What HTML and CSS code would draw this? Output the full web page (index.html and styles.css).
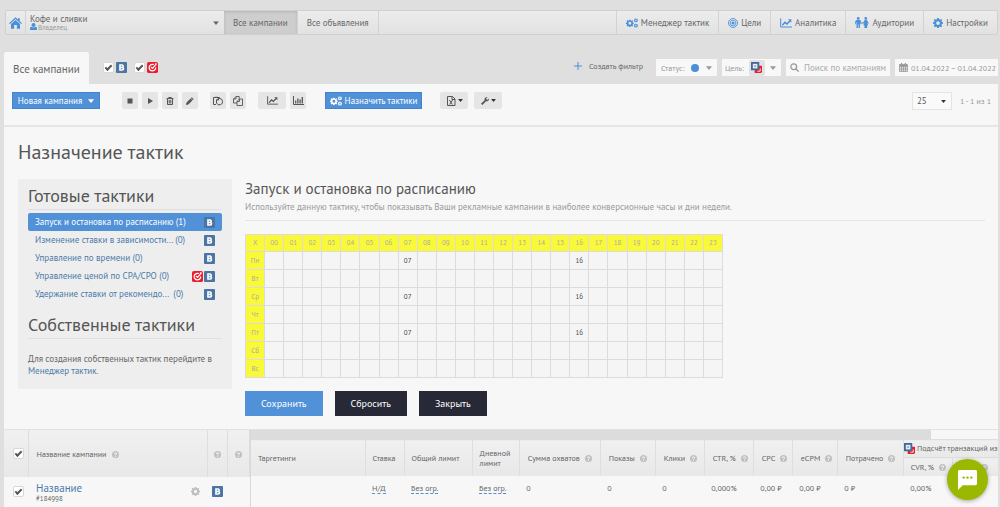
FILE: index.html
```html
<!DOCTYPE html>
<html lang="ru">
<head>
<meta charset="utf-8">
<title>Все кампании</title>
<meta name="viewport" content="width=device-width">
<link rel="stylesheet" href="styles.css">
</head>
<body>
<svg class="defs" aria-hidden="true">
  <symbol id="cog" viewBox="0 0 16 16"><path fill-rule="evenodd" d="M6.7 0h2.6l.4 2.1 1.5.6L13 1.500l1.700 1.700-1.300 1.800.7 1.500 2 .3v2.500l-2 .4-.7 1.500 1.300 1.800-1.800 1.800-1.700-1.300-1.500.7-.4 1.900H6.700l-.4-1.900-1.500-.7-1.800 1.300L1.200 13l1.300-1.800-.7-1.500L0 9.300V6.800l1.900-.4.6-1.500L1.200 3.200 3 1.400l1.800 1.300 1.500-.6zM8 5a3 3 0 1 0 0 6 3 3 0 0 0 0-6z"/></symbol>
  <symbol id="cogs" viewBox="0 0 20 16"><use href="#cog" x="0" y="2" width="13" height="13"/><use href="#cog" x="13" y="0" width="7" height="7"/><use href="#cog" x="13" y="9" width="7" height="7"/></symbol>
  <symbol id="caret" viewBox="0 0 8 5"><path d="M0 0h8L4 5z"/></symbol>
  <symbol id="vk" viewBox="0 0 12 12"><rect width="12" height="12" rx="1" fill="#4c75a3"/><path fill="none" stroke="#fff" stroke-width="1.700" d="M4.300 3.300v5.400h2.500a1.350 1.350 0 0 0 0-2.700H4.300h2.200a1.350 1.350 0 0 0 0-2.700z"/></symbol>
  <symbol id="mt" viewBox="0 0 12 12"><rect width="12" height="12" rx="2" fill="#ed1c2e"/><path fill="none" stroke="#fff" stroke-width="1.300" d="M7.500 2.900A3.600 3.600 0 1 0 9.500 6M4.200 5.300L6 7l4-4.500M8.600 2l2 .3"/></symbol>
  <symbol id="both" viewBox="0 0 12 12"><path fill="#ed1c2e" d="M4 4h8v6a2 2 0 0 1-2 2H4z"/><path fill="none" stroke="#fff" d="M10 7v3H7"/><path fill="#426a98" d="M0 0h9v9H0z"/><path fill="#e4edf6" d="M2 2h5v5H2z"/><path fill="#8eabc9" d="M3.500 3.500h2v2h-2z"/></symbol>
  <symbol id="help" viewBox="0 0 8 8"><circle cx="4" cy="4" r="4" fill="#c0c0c0"/><path fill="none" stroke="#fff" d="M2.700 3.200c0-1.600 2.600-1.600 2.600 0C5.300 4 4 4 4 5M4 5.600v1"/></symbol>
  <symbol id="chart" viewBox="0 0 18 14"><path fill="none" stroke="currentColor" stroke-width="1.500" d="M1 0v13h17"/><path fill="none" stroke="currentColor" stroke-width="2.200" d="M3.500 10.500L7.500 6l3 2.500L15 3.500"/><path d="M12 1.500h5v5z"/></symbol>
  <symbol id="man" viewBox="0 0 9 16"><circle cx="4.500" cy="2" r="2"/><path d="M2 4.500h5L9 6v4.500H7.700V7.500H7V16H5v-5H4v5H2V7.500h-.7v3H0V6z"/></symbol>
  <symbol id="woman" viewBox="0 0 9 16"><circle cx="4.500" cy="2" r="2"/><path d="M3 4.500h3L9 9l-1 .8-1.700-2.300L8 12H6.500v4h-4v-4H1l1.700-4.500L1 9.800 0 9z"/></symbol>
</svg>

<header class="topbar">
  <a class="home" href="#" aria-label="Главная"><svg class="i13" viewBox="0 0 16 14"><path d="M8 0l3 2.700V1h2.200v3.700L16 7.200l-1 1L8 2 1 8.200l-1-1z"/><path d="M8 3.300l5.600 5V14H9.700V9.500H6.300V14H2.400V8.300z"/></svg></a>
  <button class="account"><span class="account-text"><span>Кофе и сливки</span><span class="role"><svg class="i7" viewBox="0 0 14 14"><circle cx="7" cy="4" r="4"/><path d="M0 14v-3c0-3 2-3.500 3-3.500 2 2 6 2 8 0 1 0 3 .5 3 3.500v3z"/></svg>Владелец</span></span><svg class="caret" viewBox="0 0 8 5"><use href="#caret"/></svg></button>
  <nav class="nav">
    <a class="active" href="#">Все кампании</a>
    <a href="#">Все объявления</a>
  </nav>
  <nav class="nav tools">
    <a href="#"><svg class="cogs"><use href="#cogs"/></svg>Менеджер тактик</a>
    <a href="#"><svg class="i10" viewBox="0 0 16 16"><g fill="none" stroke="currentColor" stroke-width="1.400"><circle cx="8" cy="8" r="7.200"/><circle cx="8" cy="8" r="4.600"/></g><circle cx="8" cy="8" r="2.400"/></svg>Цели</a>
    <a href="#"><svg class="cogs"><use href="#chart"/></svg>Аналитика</a>
    <a href="#"><svg class="people" viewBox="0 0 20 16"><use href="#man" width="9" height="16"/><path d="M8 8h4v1.500H8z"/><use href="#woman" x="11" width="9" height="16"/></svg>Аудитории</a>
    <a href="#"><svg class="i10"><use href="#cog"/></svg>Настройки</a>
  </nav>
</header>

<div class="filters">
  <h2 class="tab">Все кампании</h2>
  <div class="nets">
    <label><input class="check" type="checkbox" checked aria-label="ВКонтакте"><svg class="i11"><use href="#vk"/></svg></label>
    <label><input class="check" type="checkbox" checked aria-label="myTarget"><svg class="i11"><use href="#mt"/></svg></label>
  </div>
  <div class="filter-fields">
    <button class="create"><svg class="i8" viewBox="0 0 8 8"><path fill="none" stroke="currentColor" d="M4 0v8M0 4h8"/></svg>Создать фильтр</button>
    <button class="field status">Статус:<svg class="i8" viewBox="0 0 8 8"><circle cx="4" cy="4" r="4" fill="#4a8fd8"/></svg><svg class="caret"><use href="#caret"/></svg></button>
    <button class="field goal">Цель:<span class="chip"><svg class="i11"><use href="#both"/></svg></span><svg class="caret"><use href="#caret"/></svg></button>
    <label class="field search"><svg class="i9" viewBox="0 0 9 9"><path fill="none" stroke="currentColor" stroke-width="1.300" d="M3.700.8a2.900 2.900 0 1 0 0 5.800 2.900 2.900 0 0 0 0-5.800zM6 6l2.600 2.600"/></svg><input type="text" placeholder="Поиск по кампаниям" aria-label="Поиск по кампаниям"></label>
    <button class="field date"><svg class="i9" viewBox="0 0 9 9"><path fill="none" stroke="currentColor" stroke-width=".8" d="M.5 1.500h8v7h-8zM.5 3.500h8M.5 5.200h8M.5 6.900h8M2.500 3v5.500M4.500 3v5.500M6.500 3v5.500"/><path d="M.5 1.500h8v1.800h-8zM2 0h1.200v2H2zM5.800 0H7v2H5.800z"/></svg>01.04.2022 – 01.04.2022</button>
  </div>
</div>

<main class="page">
  <div class="toolbar">
    <button class="blue create-campaign">Новая кампания<svg class="caret"><use href="#caret"/></svg></button>
    <div class="group">
      <button class="tool" aria-label="Остановить"><svg class="i8" viewBox="0 0 8 8"><path d="M1.500 1.500h5v5h-5z"/></svg></button>
      <button class="tool" aria-label="Запустить"><svg class="i8" viewBox="0 0 8 8"><path d="M2 1l5 3-5 3z"/></svg></button>
      <button class="tool" aria-label="Удалить"><svg class="i8" viewBox="0 0 8 8"><path fill="none" stroke="currentColor" d="M.5 1.600h7M2.700 1.500V.5h2.600v1M1.500 2v5.500h5V2M3.200 3v3.500M4.800 3v3.500"/></svg></button>
      <button class="tool" aria-label="Изменить"><svg class="i8" viewBox="0 0 8 8"><path d="M5.800.3l1.900 1.900-.9.900-1.900-1.900zM4.500 1.600l1.900 1.900L2.300 7.600 0 8l.4-2.300z"/></svg></button>
    </div>
    <div class="group">
      <button class="tool" aria-label="Вставить"><svg class="i10" viewBox="0 0 10 10"><path fill="none" stroke="currentColor" d="M3 8.500H.5v-7h6v1M2 1.300h3M3.500 4L5 2.500h1.500a3.200 3.200 0 1 1-3 4.500zM3.500 4h2V2.500"/></svg></button>
      <button class="tool" aria-label="Копировать"><svg class="i10" viewBox="0 0 10 10"><path fill="none" stroke="currentColor" stroke-width=".9" d="M4 7H.5V3L3 .5h3.200V3M3 .5V3H.5M4 5.500L6.500 3h3v6.500H4zM6.500 3v2.500H4"/></svg></button>
    </div>
    <div class="group">
      <button class="tool wide" aria-label="График"><svg class="i11"><use href="#chart"/></svg></button>
      <button class="tool" aria-label="Гистограмма"><svg class="i11" viewBox="0 0 11 11"><path fill="none" stroke="currentColor" d="M.5 1v8.500H11"/><path fill="none" stroke="currentColor" stroke-width="1.300" d="M2.700 8.500v-3M4.900 8.500V3.500M7.100 8.500v-4M9.300 8.500V2"/></svg></button>
    </div>
    <button class="blue assign"><svg class="cogs"><use href="#cogs"/></svg>Назначить тактики</button>
    <div class="group menus">
      <button class="tool wide" aria-label="Экспорт"><svg class="i10" viewBox="0 0 10 10"><path fill="none" stroke="currentColor" d="M1.500.5h5l2.500 2.500v6.500H1.500zM6 .5v3h3M3.400 4l3 4.500M6.600 4l-3 4.500"/></svg><svg class="caret small"><use href="#caret"/></svg></button>
      <button class="tool wide" aria-label="Инструменты"><svg class="i8" viewBox="0 0 8 8"><path d="M0 6.700L3.600 3.200C3.200 1.500 4.500-.2 6.500.1L5.200 1.500l.3 1.100 1.100.2L8 1.400c.3 2-1.300 3.300-3 2.900L1.400 7.900z"/></svg><svg class="caret small"><use href="#caret"/></svg></button>
    </div>
    <div class="pager"><select aria-label="Строк на странице"><option>25</option></select><svg class="caret small"><use href="#caret"/></svg><span>1 - 1 из 1</span></div>
  </div>

  <section class="tactics">
    <h1>Назначение тактик</h1>
    <div class="columns">
      <aside class="panel">
        <h3>Готовые тактики</h3>
        <ul>
          <li class="selected"><a href="#"><span>Запуск и остановка по расписанию</span> (1)</a><svg class="i11"><use href="#vk"/></svg></li>
          <li><a href="#"><span>Изменение ставки в зависимости...</span> (0)</a><svg class="i11"><use href="#vk"/></svg></li>
          <li><a href="#"><span>Управление по времени</span> (0)</a><svg class="i11"><use href="#vk"/></svg></li>
          <li><a href="#"><span>Управление ценой по CPA/CPO</span> (0)</a><svg class="i11"><use href="#mt"/></svg><svg class="i11"><use href="#vk"/></svg></li>
          <li><a href="#"><span>Удержание ставки от рекомендо...</span>&nbsp; (0)</a><svg class="i11"><use href="#vk"/></svg></li>
        </ul>
        <h3>Собственные тактики</h3>
        <p>Для создания собственных тактик перейдите в <a href="#">Менеджер тактик.</a></p>
      </aside>
      <div class="detail">
        <div class="detail-head">
          <h2>Запуск и остановка по расписанию</h2>
          <p>Используйте данную тактику, чтобы показывать Ваши рекламные кампании в наиболее конверсионные часы и дни недели.</p>
        </div>
        <table class="schedule">
          <thead><tr><th>X<th>00<th>01<th>02<th>03<th>04<th>05<th>06<th>07<th>08<th>09<th>10<th>11<th>12<th>13<th>14<th>15<th>16<th>17<th>18<th>19<th>20<th>21<th>22<th>23</tr></thead>
          <tbody>
            <tr><th>Пн<td><td><td><td><td><td><td><td>07<td><td><td><td><td><td><td><td><td>16<td><td><td><td><td><td><td></tr>
            <tr><th>Вт<td><td><td><td><td><td><td><td><td><td><td><td><td><td><td><td><td><td><td><td><td><td><td><td></tr>
            <tr><th>Ср<td><td><td><td><td><td><td><td>07<td><td><td><td><td><td><td><td><td>16<td><td><td><td><td><td><td></tr>
            <tr><th>Чт<td><td><td><td><td><td><td><td><td><td><td><td><td><td><td><td><td><td><td><td><td><td><td><td></tr>
            <tr><th>Пт<td><td><td><td><td><td><td><td>07<td><td><td><td><td><td><td><td><td>16<td><td><td><td><td><td><td></tr>
            <tr><th>Сб<td><td><td><td><td><td><td><td><td><td><td><td><td><td><td><td><td><td><td><td><td><td><td><td></tr>
            <tr><th>Вс<td><td><td><td><td><td><td><td><td><td><td><td><td><td><td><td><td><td><td><td><td><td><td><td></tr>
          </tbody>
        </table>
        <div class="actions">
          <button class="save">Сохранить</button>
          <button>Сбросить</button>
          <button>Закрыть</button>
        </div>
      </div>
    </div>
  </section>

  <div class="grid">
    <table class="names">
      <colgroup><col class="c-check"><col><col class="c-net"><col class="c-state"></colgroup>
      <thead><tr>
        <th><input class="check" type="checkbox" checked aria-label="Выбрать все"></th>
        <th>Название кампании <svg class="help"><use href="#help"/></svg></th>
        <th><svg class="help"><use href="#help"/></svg></th>
        <th><svg class="help"><use href="#help"/></svg></th>
      </tr></thead>
      <tbody><tr>
        <td><input class="check" type="checkbox" checked aria-label="Выбрать кампанию"></td>
        <td><div class="campaign"><div><a href="#">Название</a><small>#184998</small></div><svg class="i9 gear"><use href="#cog"/></svg></div></td>
        <td><svg class="i11"><use href="#vk"/></svg></td>
        <td></td>
      </tr></tbody>
    </table>
    <div class="stats-wrap">
      <div class="scrollbar"><div class="thumb"></div></div>
      <table class="stats">
        <colgroup><col class="w115"><col class="w39"><col class="w68"><col class="w47"><col class="w81"><col class="w55"><col class="w49"><col class="w49"><col class="w39"><col class="w45"><col class="w66"><col class="w49"><col class="w49"></colgroup>
        <thead>
          <tr>
            <th rowspan="2">Таргетинги</th>
            <th rowspan="2">Ставка</th>
            <th rowspan="2">Общий лимит</th>
            <th rowspan="2">Дневной<br>лимит</th>
            <th rowspan="2">Сумма охватов <svg class="help"><use href="#help"/></svg></th>
            <th rowspan="2">Показы <svg class="help"><use href="#help"/></svg></th>
            <th rowspan="2">Клики <svg class="help"><use href="#help"/></svg></th>
            <th rowspan="2">CTR, % <svg class="help"><use href="#help"/></svg></th>
            <th rowspan="2">CPC <svg class="help"><use href="#help"/></svg></th>
            <th rowspan="2">eCPM <svg class="help"><use href="#help"/></svg></th>
            <th rowspan="2">Потрачено <svg class="help"><use href="#help"/></svg></th>
            <th class="goal-head" colspan="2"><svg class="i11"><use href="#both"/></svg> Подсчёт транзакций из</th>
          </tr>
          <tr><th>CVR, % <svg class="help"><use href="#help"/></svg></th><th class="end"><svg class="help"><use href="#help"/></svg></th></tr>
        </thead>
        <tbody><tr>
          <td></td><td><a href="#">Н/Д</a></td><td><a href="#">Без огр.</a></td><td><a href="#">Без огр.</a></td><td>0</td><td>0</td><td>0</td><td>0,000%</td><td>0,00 ₽</td><td>0,00 ₽</td><td>0 ₽</td><td>0,00%</td><td></td>
        </tr></tbody>
      </table>
    </div>
  </div>
</main>

<button class="chat" aria-label="Открыть чат"><svg viewBox="0 0 22 21"><path fill="#fff" d="M2.500 0h17A1.500 1.500 0 0 1 21 1.500v13a1.500 1.500 0 0 1-1.500 1.500H6l-5 5V1.500A1.500 1.500 0 0 1 2.500 0z"/><g fill="#9bb800"><circle cx="7" cy="8" r="1.300"/><circle cx="11" cy="8" r="1.300"/><circle cx="15" cy="8" r="1.300"/></g></svg></button>
</body>
</html>
```

FILE: styles.css
```css
*, *::before { box-sizing: border-box; }

body {
  margin: 0;
  padding: 10px 2px 0 4px;
  min-height: 100vh;
  display: flex;
  flex-direction: column;
  overflow: hidden;
  background: #dfdfdf;
  color: #666;
  font-family: "PT Sans", "Noto Sans", sans-serif;
  font-size: 8px;
  line-height: 12px;
}

button, input, select { font: inherit; color: inherit; margin: 0; }
button { border: 0; padding: 0; background: none; white-space: nowrap; }
a { color: #4b7aaa; text-decoration: none; }
h1, h2, h3, p, ul { margin: 0; padding: 0; font-weight: 400; }
svg { flex: none; fill: currentColor; }
.defs { position: absolute; width: 0; height: 0; }

.i7 { width: 7px; height: 7px; }
.i8 { width: 8px; height: 8px; }
.i9 { width: 9px; height: 9px; }
.i10 { width: 10px; height: 10px; }
.i11 { width: 11px; height: 11px; }
.i13 { width: 13px; height: 12px; }
.cogs { width: 12px; height: 10px; }
.people { width: 14px; height: 11px; }
.caret { width: 6px; height: 4px; }
.caret.small { width: 5px; height: 3px; color: #333; }
.help { width: 7px; height: 7px; margin-left: 3px; }

.check {
  appearance: none;
  width: 11px;
  height: 11px;
  border: 1px solid #d8d8d8;
  border-radius: 2px;
  background: #fff;
  display: inline-grid;
  place-items: center;
  vertical-align: middle;
}
.check:checked::before {
  content: "";
  width: 7px;
  height: 4px;
  border: solid #555;
  border-width: 0 0 2px 2px;
  transform: translateY(-1px) rotate(-45deg);
}

.topbar {
  display: flex;
  height: 25px;
  margin-left: 1px;
  border: 1px solid #d0d0d0;
  border-radius: 2px;
  background: linear-gradient(#ececec, #e2e2e2);
  font-size: 9px;
}
.home {
  width: 20px;
  display: grid;
  place-items: center;
  color: #4a8fd8;
  border-right: 1px solid #d2d2d2;
}
.account {
  width: 198px;
  padding: 0 5px 0 4px;
  display: flex;
  align-items: center;
  justify-content: space-between;
  text-align: left;
  line-height: 9px;
}
.account-text, .role { display: flex; }
.account-text { flex-direction: column; }
.role { gap: 1px; color: #999; font-size: 7px; }
.role svg { color: #4a8fd8; }
.nav { display: flex; }
.nav a {
  display: flex;
  align-items: center;
  gap: 3px;
  padding: 0 9px;
  color: #666;
  white-space: nowrap;
  border-right: 1px solid #d2d2d2;
}
.nav .active { background: #cecece; box-shadow: inset 0 1px 3px #b5b5b5; }
.tools { margin-left: auto; border-left: 1px solid #d2d2d2; }
.tools a:last-child { border-right: 0; }
.tools svg { color: #4a8fd8; }

.filters { display: flex; margin-top: 17px; height: 32px; }
.tab {
  padding: 0 9px;
  background: #f7f7f7;
  border-radius: 2px 2px 0 0;
  font-size: 11px;
  line-height: 34px;
}
.nets { display: flex; gap: 7px; margin: 10px 0 0 14px; height: 11px; }
.nets label { display: flex; gap: 2px; }
.filter-fields { display: flex; align-items: flex-start; gap: 5px; margin-left: auto; padding-top: 7px; }
.create { display: flex; gap: 7px; align-items: center; margin: 0 8px 0 0; height: 14px; color: #666; }
.create svg { color: #4a8fd8; }
.field {
  display: flex;
  align-items: center;
  height: 17px;
  padding: 0 5px;
  gap: 5px;
  background: #f8f8f8;
  color: #999;
}
.status { width: 61px; justify-content: space-between; }
.goal { width: 59px; padding: 0 5px 0 3px; gap: 2px; justify-content: space-between; }
.chip { display: grid; place-items: center; width: 16px; height: 16px; background: #e2e2e2; border-radius: 2px; }
.search { width: 104px; padding: 0 2px 0 4px; font-size: 9px; }
.search input { width: 0; flex: 1; border: 0; padding: 0; background: none; outline: 0; }
.search input::placeholder { color: #aaa; }
.date { width: 103px; padding: 0 2px 0 4px; gap: 3px; }

.page { flex: 1; display: flex; flex-direction: column; background: #f7f7f7; }
.toolbar {
  display: flex;
  align-items: flex-start;
  padding: 8px 7px 0 8px;
  height: 43px;
  border-bottom: 2px solid #e6e6e6;
}
.blue {
  display: flex;
  align-items: center;
  justify-content: center;
  height: 17px;
  gap: 6px;
  background: #5091d8;
  border: 1px solid #4384cc;
  color: #fff;
  font-size: 9px;
}
.create-campaign { width: 88px; }
.assign { width: 97px; gap: 3px; margin-left: 19px; }
.group { display: flex; gap: 4px; margin-left: 12px; }
.create-campaign + .group { margin-left: 22px; }
.group.menus { margin-left: 18px; gap: 6px; }
.tool {
  display: flex;
  align-items: center;
  justify-content: center;
  gap: 2px;
  width: 16px;
  height: 17px;
  border-radius: 2px;
  background: #e5e5e5;
  color: #555;
}
.tool.wide { width: 28px; }
.pager { display: grid; grid-template-columns: 40px auto; align-items: center; gap: 8px; margin-left: auto; color: #999; }
.pager select {
  grid-area: 1 / 1;
  appearance: none;
  width: 40px;
  height: 18px;
  padding: 0 4px;
  border: 1px solid #e4e4e4;
  border-radius: 0;
  background: #fafafa;
  color: #555;
  font-size: 9px;
}
.pager .caret { grid-area: 1 / 1; justify-self: end; margin-right: 6px; pointer-events: none; }

.tactics { padding: 12px 13px 13px 14px; }
h1 { font-size: 20px; line-height: 26px; color: #555; }
.columns { display: flex; gap: 13px; margin-top: 14px; align-items: flex-start; }
.panel { width: 214px; padding: 6px 10px 12px; background: #eee; font-size: 9px; }
.panel h3 { font-size: 18px; line-height: 22px; padding-bottom: 2px; border-bottom: 1px solid #e0e0e0; color: #555; }
.panel ul { list-style: none; margin: 3px 0 11px; }
.panel li { display: flex; align-items: center; gap: 1px; height: 18px; padding: 0 7px; border-radius: 2px; white-space: nowrap; }
.panel li a { flex: 1; }
.panel .selected { background: #5091d8; }
.panel .selected a { color: #fff; }
.panel p { margin-top: 14px; }
.detail { flex: 1; min-width: 0; }
.detail-head { padding-bottom: 5px; border-bottom: 1px solid #e6e6e6; }
.detail-head h2 { font-size: 15px; line-height: 20px; color: #555; }
.detail-head p { font-size: 9px; line-height: 16px; color: #999; }
.schedule {
  width: 478px;
  margin-top: 13px;
  table-layout: fixed;
  border-collapse: collapse;
  font-size: 7px;
  line-height: 10px;
  text-align: center;
  color: #444;
}
.schedule th, .schedule td { height: 18px; padding: 0; border: 1px solid #dcdcdc; font-weight: 400; background: #f5f5f5; }
.schedule th { background: #f9f93a; color: #aaa; }
.schedule thead th { height: 17px; }
.actions { display: flex; gap: 12px; margin-top: 13px; }
.actions button { height: 25px; padding: 0 16px; background: #282936; color: #fff; font-size: 10px; }
.actions .save { background: #5091d8; }

.grid { flex: 1; display: flex; align-items: flex-start; border-top: 1px solid #e2e2e2; }
.grid table { table-layout: fixed; border-collapse: collapse; line-height: 10px; }
.grid th, .grid td { padding: 0 0 0 7px; text-align: left; font-weight: 400; white-space: nowrap; }
.grid th { border-right: 1px solid #dedede; background: linear-gradient(#f0f0f0, #e8e8e8); }
.names { width: 246px; flex: none; }
.names th { height: 47px; }
.names td { height: 29px; }
.grid .names th:first-child, .grid .names td:first-child { padding-left: 9px; }
.names th:nth-child(2), .names td:nth-child(2) { padding-left: 8px; }
.names th:nth-child(n + 3), .names td:nth-child(n + 3) { padding: 0; text-align: center; }
.names th:nth-child(n + 3) .help { margin-left: 0; }
.grid svg { vertical-align: middle; }
.c-check { width: 24px; }
.c-net { width: 20px; }
.c-state { width: 22px; }
.campaign { display: flex; justify-content: space-between; align-items: center; padding-right: 8px; }
.campaign a { display: block; font-size: 11px; line-height: 14px; }
.campaign small { display: block; font-size: 7px; line-height: 8px; }
.gear { color: #bbb; }
.stats-wrap { flex: 1; min-width: 0; min-height: 78px; overflow: hidden; border-left: 1px solid #d8d8d8; }
.scrollbar { height: 9px; }
.thumb { width: 91%; height: 9px; background: #dcdcdc; }
.stats { width: 751px; }
.stats th { height: 18px; border-top: 1px solid #dedede; }
.stats th:nth-child(n + 5):not(.goal-head) { padding-left: 8px; }
.stats td { height: 24px; }
.stats td a { color: #666; border-bottom: 1px dashed #4a8fd8; }
.stats .goal-head { padding-left: 0; }
.stats .end { padding-left: 25px; }
.w115 { width: 114px; }
.w39 { width: 39px; }
.w68 { width: 68px; }
.w47 { width: 47px; }
.w81 { width: 81px; }
.w55 { width: 55px; }
.w49 { width: 49px; }
.w45 { width: 45px; }
.w66 { width: 66px; }

.chat {
  position: fixed;
  right: 12px;
  bottom: 7px;
  width: 41px;
  height: 41px;
  border-radius: 50%;
  display: grid;
  place-items: center;
  background: #9bb800;
  box-shadow: 0 1px 4px #0005;
}
.chat svg { width: 21px; height: 20px; }
```
